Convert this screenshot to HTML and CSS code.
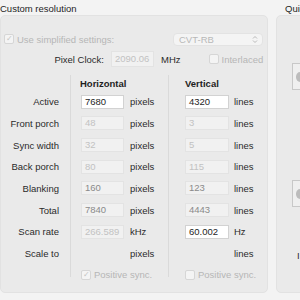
FILE: index.html
```html
<!DOCTYPE html>
<html lang="en">
<head>
    <meta charset="UTF-8">
    <title>Custom resolution</title>
    <link rel="stylesheet" href="styles.css">
</head>
<body>
    <div class="window">
        <section class="column left">
            <div class="group-title">Custom resolution</div>
            <div class="group">
                <div class="top-row">
                    <label class="check disabled">
                        <span class="box checked">&#10003;</span>
                        Use simplified settings:
                    </label>
                    <div class="popup">
                        <span>CVT-RB</span>
                        <svg class="updown" width="6" height="9" viewBox="0 0 6 9">
                            <path d="M1 3.5 L3 1.5 L5 3.5 M1 5.5 L3 7.5 L5 5.5" fill="none" stroke="#b9b9b9" stroke-width="1"/>
                        </svg>
                    </div>
                </div>

                <div class="clock-row">
                    <span class="clock-label">Pixel Clock:</span>
                    <span class="field wide disabled">2090.06</span>
                    <span class="unit">MHz</span>
                    <label class="check disabled interlaced">
                        <span class="box"></span>
                        Interlaced
                    </label>
                </div>

                <!-- timing table -->
                <div class="timings">
                    <div class="cell label"></div>
                    <div class="cell col-h head">Horizontal</div>
                    <div class="cell col-v head">Vertical</div>

                    <div class="cell label">Active</div>
                    <div class="cell col-h"><span class="field">7680</span><span class="unit">pixels</span></div>
                    <div class="cell col-v"><span class="field">4320</span><span class="unit">lines</span></div>

                    <div class="cell label">Front porch</div>
                    <div class="cell col-h"><span class="field disabled">48</span><span class="unit">pixels</span></div>
                    <div class="cell col-v"><span class="field disabled">3</span><span class="unit">lines</span></div>

                    <div class="cell label">Sync width</div>
                    <div class="cell col-h"><span class="field disabled">32</span><span class="unit">pixels</span></div>
                    <div class="cell col-v"><span class="field disabled">5</span><span class="unit">lines</span></div>

                    <div class="cell label">Back porch</div>
                    <div class="cell col-h"><span class="field disabled">80</span><span class="unit">pixels</span></div>
                    <div class="cell col-v"><span class="field disabled">115</span><span class="unit">lines</span></div>

                    <div class="cell label">Blanking</div>
                    <div class="cell col-h"><span class="field readonly">160</span><span class="unit">pixels</span></div>
                    <div class="cell col-v"><span class="field readonly">123</span><span class="unit">lines</span></div>

                    <div class="cell label">Total</div>
                    <div class="cell col-h"><span class="field readonly">7840</span><span class="unit">pixels</span></div>
                    <div class="cell col-v"><span class="field readonly">4443</span><span class="unit">lines</span></div>

                    <div class="cell label">Scan rate</div>
                    <div class="cell col-h"><span class="field disabled">266.589</span><span class="unit">kHz</span></div>
                    <div class="cell col-v"><span class="field">60.002</span><span class="unit">Hz</span></div>

                    <div class="cell label">Scale to</div>
                    <div class="cell col-h"><span class="field blank"></span><span class="unit">pixels</span></div>
                    <div class="cell col-v"><span class="field blank"></span><span class="unit">lines</span></div>

                    <div class="cell label"></div>
                    <div class="cell col-h sync">
                        <label class="check disabled"><span class="box checked">&#10003;</span>Positive sync.</label>
                    </div>
                    <div class="cell col-v sync">
                        <label class="check disabled"><span class="box"></span>Positive sync.</label>
                    </div>
                </div>
            </div>
        </section>

        <section class="column right">
            <div class="group-title">Quick</div>
            <div class="group quick">
                <div class="thumb"><span class="knob"></span></div>
                <div class="thumb second"><span class="knob"></span></div>
                <div class="quick-text">I</div>
            </div>
        </section>
    </div>
</body>
</html>
```

FILE: styles.css
```css
body {
    margin: 0;
    width: 300px;
    height: 300px;
    overflow: hidden;
    background-color: #f3f3f3;
    font-family: 'Liberation Sans', Arial, sans-serif;
    font-size: 9.5px;
    color: #2a2a2a;
}

.window {
    display: flex;
    gap: 8px;
}

.column.left {
    flex: none;
    width: 268px;
}

.column.right {
    flex: none;
    width: 100px;
}

.group-title {
    height: 15px;
    line-height: 18px;
    color: #1e1e1e;
}

.column.right .group-title {
    padding-left: 9px;
}

.group {
    height: 276px;
    background-color: #eaeaea;
    border: 1px solid #e2e2e2;
    border-radius: 5px;
}

.top-row {
    display: flex;
    align-items: center;
    justify-content: space-between;
    height: 14px;
    margin-top: 16px;
    padding: 0 4px 0 3px;
}

.check {
    display: flex;
    align-items: center;
    gap: 3px;
}

.check.disabled {
    color: #b6b6b6;
}

.box {
    box-sizing: border-box;
    width: 10px;
    height: 10px;
    border: 1px solid #d6d6d6;
    border-radius: 2px;
    background-color: #f4f4f4;
    font-size: 8px;
    line-height: 8px;
    text-align: center;
    color: #c4c4c4;
}

.popup {
    box-sizing: border-box;
    width: 90px;
    height: 13px;
    display: flex;
    align-items: center;
    justify-content: space-between;
    padding: 0 4px 0 5px;
    background-color: #f4f4f4;
    border: 1px solid #e3e3e3;
    border-radius: 4px;
    color: #b8b8b8;
}

.clock-row {
    display: flex;
    align-items: center;
    height: 16px;
    margin-top: 5px;
}

.clock-label {
    width: 103px;
    text-align: right;
    margin-right: 7px;
}

.field {
    box-sizing: border-box;
    display: inline-block;
    width: 43px;
    height: 14px;
    line-height: 12px;
    padding: 0 3px;
    background-color: #ffffff;
    border: 1px solid #d2d2d2;
    color: #1e1e1e;
}

.field.wide {
    height: 16px;
    line-height: 14px;
}

.field.disabled {
    background-color: #f1f1f1;
    border-color: #e3e3e3;
    color: #c2c2c2;
}

.field.readonly {
    background-color: #f1f1f1;
    border-color: #e3e3e3;
    color: #8a8a8a;
}

.field.blank {
    visibility: hidden;
}

.unit {
    margin-left: 6px;
}

.clock-row .unit {
    margin-left: 7px;
}

.interlaced {
    margin-left: 28px;
}

.timings {
    display: grid;
    grid-template-columns: 69px 98px 101px;
    grid-template-rows: 16px repeat(8, 21.67px) 13px;
    margin-top: 8px;
}

.cell {
    display: flex;
    align-items: center;
}

.cell.label {
    justify-content: flex-end;
    padding-right: 11px;
}

.col-h, .col-v {
    border-left: 1px solid #dadada;
}

.col-h {
    padding-left: 10px;
}

.col-v {
    padding-left: 16px;
}

.col-v .field {
    width: 44px;
}

.col-v .unit {
    margin-left: 5px;
}

.head {
    font-weight: bold;
    padding-left: 9px;
    color: #1e1e1e;
}

.col-v.head {
    padding-left: 16px;
}

.sync {
    align-items: flex-start;
    padding-top: 5px;
}

.group.quick {
    border-radius: 5px 0 0 5px;
}

.thumb {
    box-sizing: border-box;
    width: 30px;
    height: 27px;
    margin: 47px 0 0 15px;
    border: 1px solid #c8c8c8;
    background-color: #efefef;
    display: flex;
    align-items: center;
}

.thumb.second {
    margin-top: 90px;
}

.knob {
    width: 8px;
    height: 10px;
    margin-left: 3px;
    border-radius: 50%;
    background-color: #bcbcbc;
}

.quick-text {
    margin: 43px 0 0 20px;
}
```
